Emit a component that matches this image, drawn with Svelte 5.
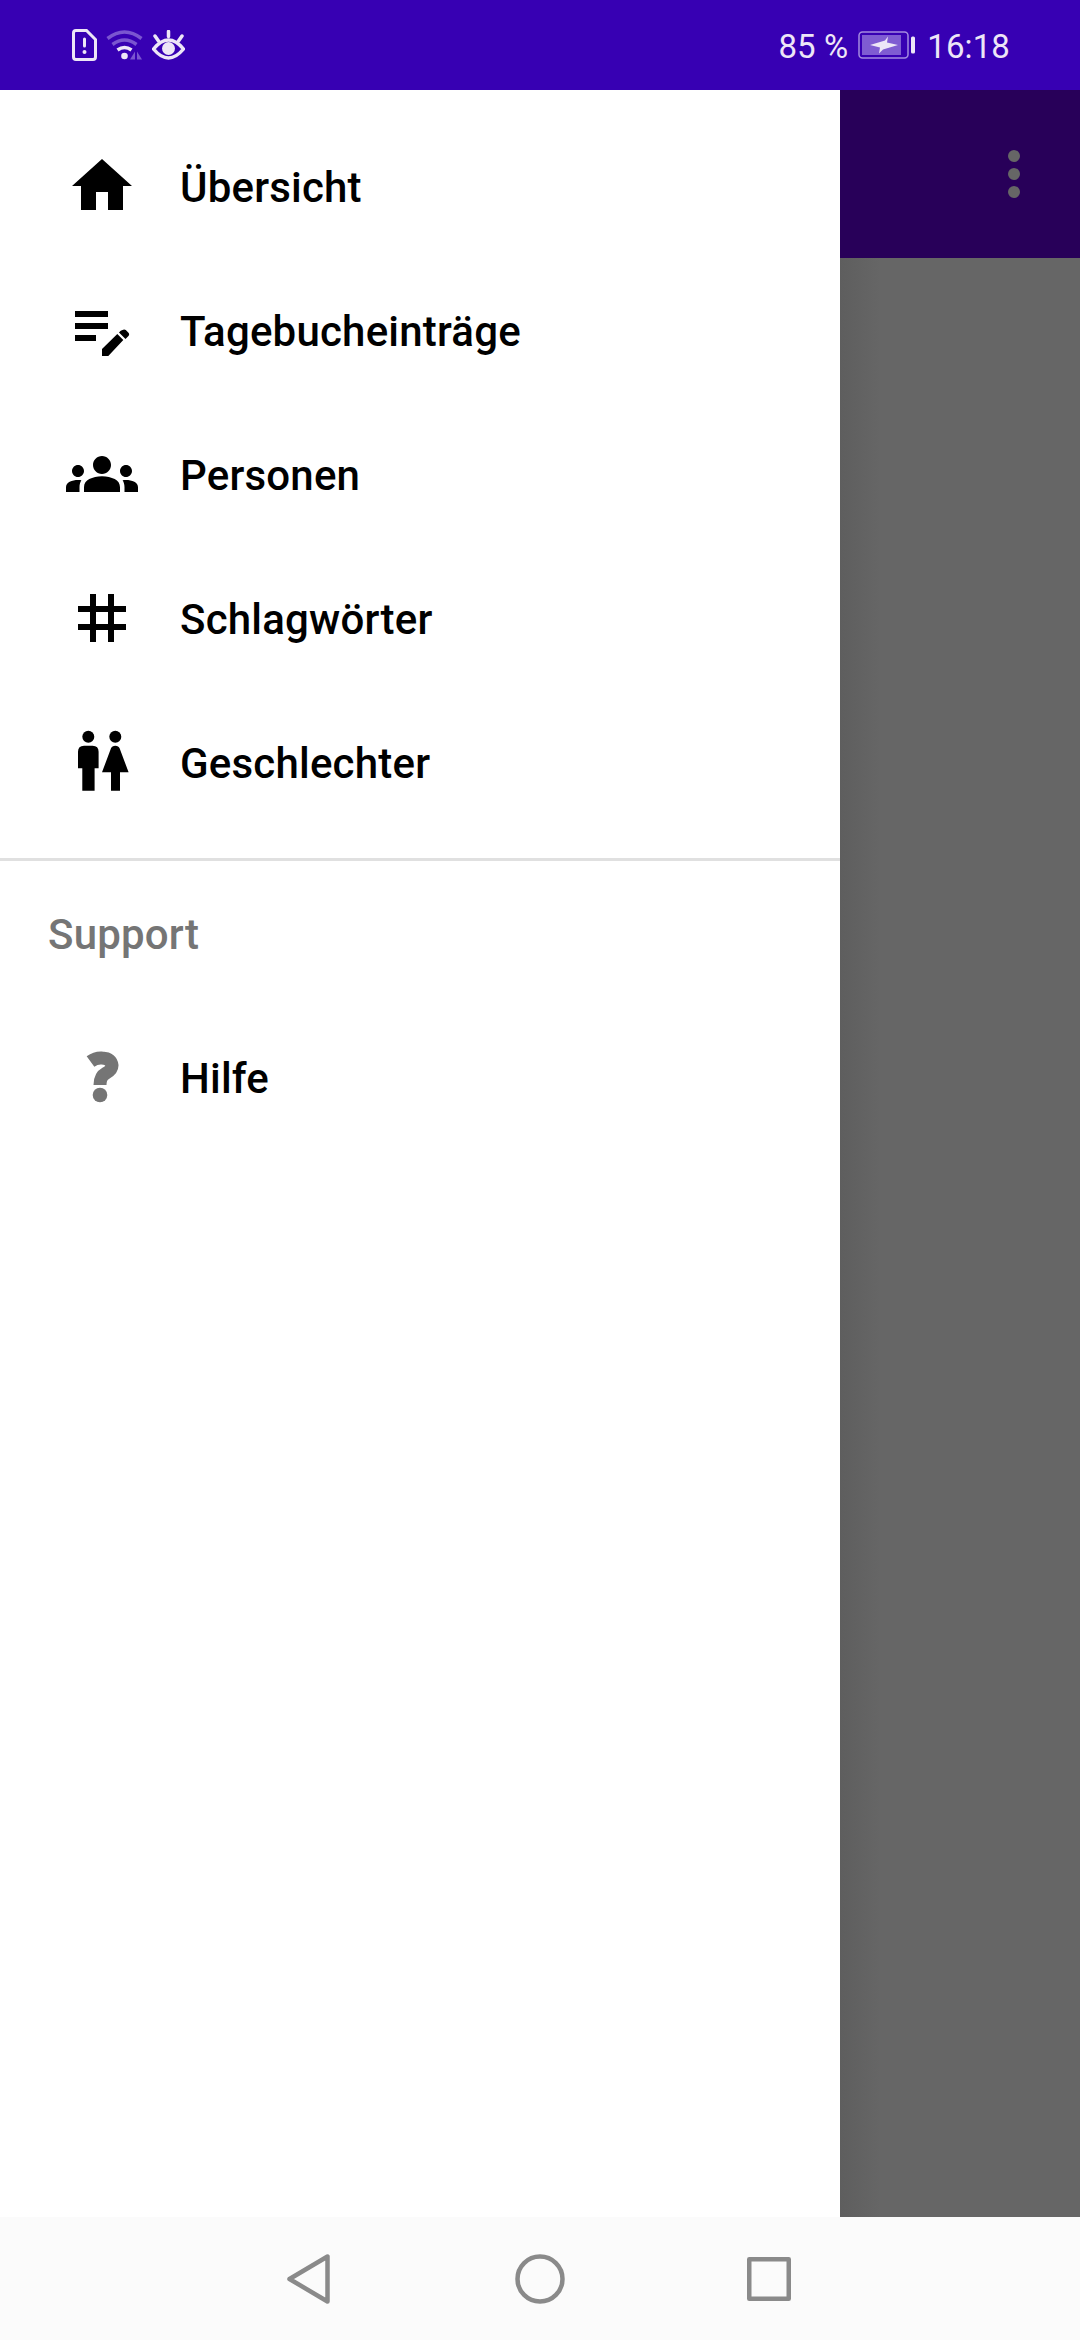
<script>
    const items = [
        { label: 'Übersicht', icon: 'home' },
        { label: 'Tagebucheinträge', icon: 'note' },
        { label: 'Personen', icon: 'people' },
        { label: 'Schlagwörter', icon: 'tag' },
        { label: 'Geschlechter', icon: 'wc' }
    ];
</script>

{#snippet navIcon(name)}
    <svg class="icon" viewBox="0 0 72 72">
        {#if name === 'home'}
            <path transform="scale(3)" d="M10 20v-6h4v6h5v-8h3L12 3 2 12h3v8z" />
        {:else if name === 'note'}
            <path d="M9 17h33v6H9zM9 29h33v6H9zM9 41h21v6H9z" />
            <path d="M36 55v7h6.300l15-16-6-6zM54.700 36.700l-1.700 1.700 6.500 6.500 3.200-3.200q1-1.200 0-2.600l-2.900-3q-1.300-1.200-2.600-.4z" />
        {:else if name === 'people'}
            <path transform="scale(3)" d="M12 12.750c1.630 0 3.070.390 4.240.900 1.080.480 1.760 1.560 1.760 2.730V18H6v-1.610c0-1.180.680-2.260 1.760-2.730 1.170-.520 2.610-.910 4.240-.910zM4 13c1.100 0 2-.900 2-2s-.900-2-2-2-2 .900-2 2 .900 2 2 2zm1.130 1.100c-.370-.060-.740-.100-1.130-.100-.990 0-1.930.210-2.780.580C.480 14.900 0 15.620 0 16.430V18h4.500v-1.610c0-.830.230-1.610.630-2.290zM20 13c1.100 0 2-.900 2-2s-.900-2-2-2-2 .900-2 2 .900 2 2 2zm4 3.430c0-.810-.480-1.530-1.220-1.850-.850-.370-1.790-.580-2.780-.580-.390 0-.760.040-1.130.100.400.680.630 1.460.630 2.290V18H24v-1.570zM12 6c1.660 0 3 1.340 3 3s-1.340 3-3 3-3-1.340-3-3 1.340-3 3-3z" />
        {:else if name === 'tag'}
            <path transform="scale(3)" d="M20 10V8h-4V4h-2v4h-4V4H8v4H4v2h4v4H4v2h4v4h2v-4h4v4h2v-4h4v-2h-4v-4h4zm-6 4h-4v-4h4v4z" />
        {:else if name === 'wc'}
            <circle cx="22.300" cy="10.700" r="6" />
            <circle cx="49.300" cy="10.700" r="6" />
            <path d="M12 42.300V25.700q0-6 6-6h8.600q6 0 6 6v16.600h-4V64.700H16.300V42.300z" />
            <path d="M36 46.300l9-24q1-2.600 4.300-2.600t4.300 2.600l9 24H54V64.700h-9V46.300z" />
        {:else if name === 'help'}
            <g class="help">
                <path d="M24.500 20.500Q30 16.500 36 17Q45 17.500 46 24.500Q46 29 39.500 32.500Q34 35.500 34 44" />
                <circle cx="34" cy="54" r="7.300" />
            </g>
        {/if}
    </svg>
{/snippet}

<div class="screen">
    <header class="status">
        <svg class="sim" viewBox="0 0 25 32">
            <path d="M4 1.500h10.500l9 9V28q0 2.500-2.500 2.500H4q-2.500 0-2.500-2.500V4q0-2.500 2.500-2.500z" />
            <rect x="11" y="8.500" width="3" height="10" rx="1.500" />
            <circle cx="12.500" cy="23" r="2" />
        </svg>
        <svg class="wifi" viewBox="0 0 37 31">
            <path class="dim" d="M1.500 9.500q17-13 34 0" />
            <path class="dim" d="M6.500 15.500q12-9 24 0" />
            <path class="on" d="M11.500 21q7-5 14 0" />
            <circle cx="18.500" cy="27" r="3.300" />
            <path class="arrows" d="M29 22.500v8h-5zM31 22.500v8h5z" />
        </svg>
        <svg class="eye" viewBox="0 0 33 30">
            <path class="line" d="M16.500 1.500v5M3 6l3.500 5M30 6l-3.500 5" />
            <path class="line" d="M1.500 19q15-18 30 0q-15 18-30 0z" />
            <circle cx="16.500" cy="18.500" r="6.500" />
        </svg>
        <span class="spacer"></span>
        <span class="pct">85 %</span>
        <svg class="battery" viewBox="0 0 58 28">
            <rect class="shell" x="1" y="1" width="49" height="26" rx="3.500" />
            <rect class="level" x="4" y="4" width="39" height="20" />
            <path class="bolt" d="M12 14l15-4.500 3-4-1 6 11 2.500-15 4.500-4 4 1-6z" />
            <rect class="cap" x="53" y="5.500" width="4" height="17" rx="1.500" />
        </svg>
        <span class="time">16:18</span>
    </header>

    <div class="main">
        <nav class="drawer">
            {#each items as item}
                <div class="row">
                    {@render navIcon(item.icon)}
                    <span>{item.label}</span>
                </div>
            {/each}
            <div class="divider"></div>
            <div class="section"><span>Support</span></div>
            <div class="row">
                {@render navIcon('help')}
                <span>Hilfe</span>
            </div>
        </nav>
        <div class="scrim">
            <div class="appbar">
                <span class="dots"><i></i><i></i><i></i></span>
            </div>
        </div>
    </div>

    <footer class="navbar">
        <svg viewBox="0 0 60 60">
            <path d="M48.500 7.500v45L10.500 30z" />
        </svg>
        <svg viewBox="0 0 60 60">
            <circle cx="30" cy="30" r="22.500" />
        </svg>
        <svg viewBox="0 0 60 60">
            <rect x="8.250" y="10.250" width="39.500" height="39.500" />
        </svg>
    </footer>
</div>

<style>
    :global(body) {
        margin: 0;
        background: #fff;
    }

    .screen {
        display: flex;
        flex-direction: column;
        width: 1080px;
        height: 2340px;
        overflow: hidden;
        font-family: Roboto, "Noto Sans", sans-serif;
    }

    .status {
        display: flex;
        align-items: center;
        flex: none;
        box-sizing: border-box;
        height: 90px;
        padding: 0 70px 0 72px;
        background: #3700b3;
        color: #ede6f7;
        font-size: 33px;
        letter-spacing: 0.1px;
    }

    .status svg {
        flex: none;
    }

    .pct,
    .time {
        padding-top: 2px;
    }

    .sim {
        width: 25px;
        height: 32px;
        margin-top: -1px;
    }

    .sim path {
        fill: none;
        stroke: #ede6f7;
        stroke-width: 3;
    }

    .sim rect,
    .sim circle {
        fill: #ede6f7;
    }

    .wifi {
        width: 37px;
        height: 31px;
        margin-left: 9px;
        margin-top: -1px;
    }

    .wifi path {
        fill: none;
        stroke-width: 3.500;
    }

    .wifi .dim {
        stroke: #7a55d0;
    }

    .wifi .on {
        stroke: #ede6f7;
    }

    .wifi circle {
        fill: #ede6f7;
    }

    .wifi .arrows {
        fill: #7a55d0;
        stroke: none;
    }

    .eye {
        width: 33px;
        height: 30px;
        margin-left: 9px;
    }

    .eye .line {
        fill: none;
        stroke: #ede6f7;
        stroke-width: 3.500;
        stroke-linecap: round;
    }

    .eye circle {
        fill: #ede6f7;
    }

    .spacer {
        flex: 1;
    }

    .battery {
        width: 58px;
        height: 28px;
        margin: 0 11px 0 10px;
    }

    .shell {
        fill: none;
        stroke: #a48be0;
        stroke-width: 1.500;
    }

    .level {
        fill: #7f5cd2;
    }

    .bolt {
        fill: #ede6f7;
    }

    .cap {
        fill: #ede6f7;
    }

    .main {
        display: flex;
        flex: 1;
        min-height: 0;
    }

    .drawer {
        flex: none;
        box-sizing: border-box;
        width: 840px;
        padding-top: 24px;
        background: #fff;
    }

    .row {
        display: flex;
        align-items: center;
        gap: 42px;
        height: 144px;
        padding-left: 66px;
        color: #000;
        font-size: 42px;
        font-weight: 500;
        letter-spacing: 0.2px;
    }

    .row span,
    .section span {
        padding-top: 2px;
    }

    .icon {
        flex: none;
        width: 72px;
        height: 72px;
        fill: #000;
    }

    .help path {
        fill: none;
        stroke: #757575;
        stroke-width: 13;
    }

    .help circle {
        fill: #757575;
    }

    .divider {
        height: 3px;
        margin-top: 24px;
        background: #e0e0e0;
    }

    .section {
        display: flex;
        align-items: center;
        height: 144px;
        padding-left: 48px;
        color: #757575;
        font-size: 42px;
        font-weight: 500;
        letter-spacing: 0.2px;
    }

    .scrim {
        flex: 1;
        background: linear-gradient(to right, #5e5e5e, #666 40px);
    }

    .appbar {
        display: flex;
        align-items: center;
        justify-content: flex-end;
        box-sizing: border-box;
        height: 168px;
        padding-right: 60px;
        background: #280059;
    }

    .dots {
        display: flex;
        flex-direction: column;
        gap: 6px;
    }

    .dots i {
        display: block;
        width: 12px;
        height: 12px;
        border-radius: 50%;
        background: #666;
    }

    .navbar {
        display: flex;
        align-items: center;
        justify-content: center;
        gap: 171px;
        flex: none;
        box-sizing: border-box;
        height: 123px;
        padding-top: 1px;
        background: #fbfbfb;
    }

    .navbar svg {
        width: 60px;
        height: 60px;
        fill: none;
        stroke: #8a8a8a;
        stroke-width: 4.500;
        stroke-linejoin: round;
    }
</style>
